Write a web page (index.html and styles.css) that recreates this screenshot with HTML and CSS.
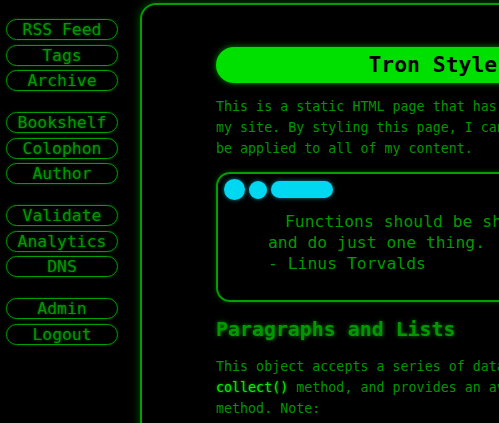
FILE: index.html
```html
<!DOCTYPE html>
<html>
<head>
<meta charset="utf-8">
<link rel="stylesheet" href="styles.css">
</head>
<body>
<div class="page">
  <nav class="side">
    <div class="group">
      <a class="btn">RSS Feed</a>
      <a class="btn">Tags</a>
      <a class="btn">Archive</a>
    </div>
    <div class="group">
      <a class="btn">Bookshelf</a>
      <a class="btn">Colophon</a>
      <a class="btn">Author</a>
    </div>
    <div class="group">
      <a class="btn">Validate</a>
      <a class="btn">Analytics</a>
      <a class="btn">DNS</a>
    </div>
    <div class="group">
      <a class="btn">Admin</a>
      <a class="btn">Logout</a>
    </div>
  </nav>
  <main class="main">
    <h1 class="title">Tron Style Guide</h1>
    <p class="para">This is a static HTML page that has every element I use on<br>my site. By styling this page, I can ensure a consistent style that will<br>be applied to all of my content.</p>
    <div class="quote">
      <div class="dots"><span class="dot big"></span><span class="dot small"></span><span class="bar"></span></div>
      <p class="qtext"><span class="first">Functions should be short and sweet,</span><br>and do just one thing.<br>- Linus Torvalds</p>
    </div>
    <h2 class="heading">Paragraphs and Lists</h2>
    <p class="para">This object accepts a series of data points via the<br><code class="code">collect()</code> method, and provides an average via the average()<br>method. Note:</p>
  </main>
</div>
</body>
</html>
```
FILE: styles.css
```css
html, body {
  margin: 0;
  padding: 0;
  background: #000;
  overflow: hidden;
  height: 423px;
}
body {
  font-family: "DejaVu Sans Mono", monospace;
  color: #00a000;
}
.page {
  display: flex;
  align-items: flex-start;
  padding-top: 3px;
  width: 1200px;
}
.side {
  display: flex;
  flex-direction: column;
  gap: 21px;
  width: 112px;
  padding: 16px 0 0 6px;
  flex: none;
}
.group {
  display: flex;
  flex-direction: column;
  gap: 4.5px;
}
.btn {
  display: block;
  height: 19px;
  line-height: 19px;
  border: 1px solid #00a000;
  border-radius: 11px;
  text-align: center;
  font-size: 16.4px;
  color: #009a00;
  text-shadow: 0 0 3px rgba(0, 200, 0, 0.45);
  box-shadow: 0 0 3px rgba(0, 160, 0, 0.4);
}
.main {
  margin-left: 22px;
  width: 800px;
  height: 600px;
  border: 2px solid #00a000;
  border-radius: 16px;
  padding: 42px 0 0 74px;
  box-shadow: 0 0 10px rgba(0, 190, 0, 0.45);
}
.title {
  margin: 0;
  width: 511px;
  height: 36px;
  line-height: 36px;
  background: #00e000;
  color: #000;
  border-radius: 18px;
  text-align: center;
  font-size: 21.4px;
  font-weight: bold;
  box-shadow: 0 0 6px rgba(0, 230, 0, 0.6);
}
.para {
  margin: 13px 0 0;
  font-size: 13.33px;
  line-height: 21px;
  white-space: nowrap;
  color: #009600;
}
.quote {
  margin-top: 13px;
  width: 600px;
  border: 2px solid #00a000;
  border-radius: 14px;
  padding: 5px 0 0 6px;
  box-sizing: border-box;
  height: 130px;
  box-shadow: 0 0 5px rgba(0, 180, 0, 0.4);
}
.dots {
  display: flex;
  align-items: center;
  gap: 4px;
}
.dot, .bar {
  display: block;
  background: #00d8f2;
  box-shadow: 0 0 4px rgba(0, 216, 242, 0.6);
}
.dot.big {
  width: 21px;
  height: 21px;
  border-radius: 50%;
}
.dot.small {
  width: 18px;
  height: 18px;
  border-radius: 50%;
}
.bar {
  width: 62px;
  height: 17px;
  border-radius: 9px;
}
.qtext {
  margin: 11px 0 0 44px;
  font-size: 16.4px;
  line-height: 21px;
  color: #009a00;
  white-space: nowrap;
}
.first {
  padding-left: 17px;
}
.heading {
  margin: 16px 0 0;
  font-size: 19.9px;
  line-height: 24px;
  font-weight: bold;
  color: #009a00;
  text-shadow: 0 0 4px rgba(0, 200, 0, 0.6);
}
.heading + .para {
  margin-top: 14px;
}
.code {
  font-family: "DejaVu Sans Mono", monospace;
  font-size: 13.33px;
  color: #00f000;
  text-shadow: 0 0 3px rgba(0, 255, 0, 0.6);
}
```
